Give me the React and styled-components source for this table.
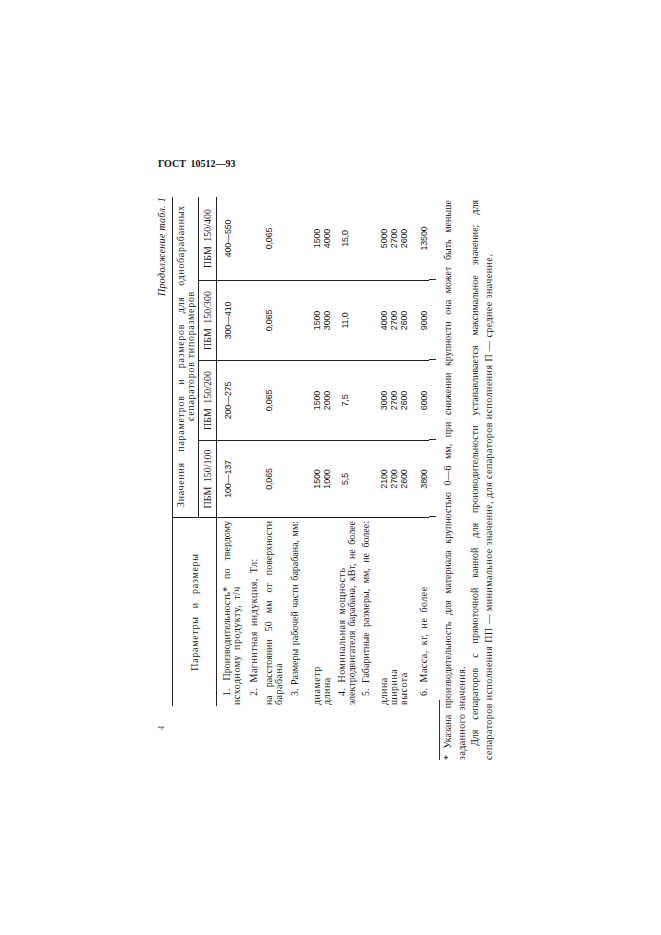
import React from "react";
import styled, { createGlobalStyle } from "styled-components";

const GlobalStyle = createGlobalStyle`
  body {
    margin: 0;
    background: #ffffff;
    font-family: "Liberation Serif", "DejaVu Serif", serif;
    color: #1b1b1b;
  }
`;

const columns = ["ПБМ 150/100", "ПБМ 150/200", "ПБМ 150/300", "ПБМ 150/400"];

const rows = [
  {
    top: 5,
    param: [
      { text: "1. Производительность* по твердому", justify: true, indent: true },
      { text: "исходному продукту, т/ч" },
    ],
    values: [["100—137"], ["200—275"], ["300—410"], ["400—550"]],
    shift: 1,
  },
  {
    top: 7,
    param: [{ text: "2. Магнитная индукция, Тл:", indent: true }],
    values: [[], [], [], []],
  },
  {
    top: 5,
    param: [
      { text: "на расстоянии 50 мм от поверхности", justify: true },
      { text: "барабана" },
    ],
    values: [["0,065"], ["0,065"], ["0,065"], ["0,065"]],
  },
  {
    top: 6,
    param: [{ text: "3. Размеры рабочей части барабана, мм:", justify: true, indent: true }],
    values: [[], [], [], []],
  },
  {
    top: 12,
    param: [{ text: "диаметр" }, { text: "длина" }],
    values: [
      ["1500", "1000"],
      ["1500", "2000"],
      ["1500", "3000"],
      ["1500", "4000"],
    ],
  },
  {
    top: 5,
    param: [
      { text: "4. Номинальная мощность", indent: true },
      { text: "электродвигателя барабана, кВт, не более", justify: true },
    ],
    values: [["5,5"], ["7,5"], ["11,0"], ["15,0"]],
    shift: 3,
  },
  {
    top: 4,
    param: [{ text: "5. Габаритные размеры, мм, не более:", justify: true, indent: true }],
    values: [[], [], [], []],
  },
  {
    top: 8,
    param: [{ text: "длина" }, { text: "ширина" }, { text: "высота" }],
    values: [
      ["2100", "2700", "2600"],
      ["3000", "2700", "2600"],
      ["4000", "2700", "2600"],
      ["5000", "2700", "2600"],
    ],
  },
  {
    top: 10,
    param: [{ text: "6. Масса, кг, не более", indent: true }],
    values: [["3800"], ["6000"], ["9000"], ["13500"]],
  },
];

const Page = styled.div`
  padding: 157px 0 0 152px;
`;

const DocCode = styled.div`
  margin-left: 6px;
  font-size: 10px;
  line-height: 14px;
  font-weight: bold;
  word-spacing: 2px;
  color: #111;
`;

/* box that reserves the rotated sheet's footprint on screen */
const Frame = styled.div`
  margin-top: 24px;
  width: 350px;
  height: 575px;
`;

/* the landscape page, laid out normally and turned a quarter left */
const Sheet = styled.div`
  width: 575px;
  height: 350px;
  transform-origin: top left;
  transform: rotate(-90deg) translateX(-100%);
  font-size: 10px;
  line-height: 10px;
`;

const CaptionRow = styled.div`
  display: flex;
  justify-content: space-between;
  align-items: center;
  height: 20px;
  padding: 0 2px 0 40px;
`;

const PageMark = styled.span`
  font-size: 8px;
  color: #444;
`;

const Caption = styled.span`
  font-style: italic;
  letter-spacing: 0.3px;
`;

const Table = styled.div`
  margin-left: 64px;
  width: 509px;
  border-top: 1.5px solid #222;
`;

const Grid = styled.div`
  display: grid;
  grid-template-columns: 189px 77px 80px 80px 83px;
`;

const HeadGrid = styled(Grid)`
  grid-template-rows: 26px 17px;
  border-bottom: 1.5px solid #222;
`;

const ParamHead = styled.div`
  grid-row: 1 / span 2;
  display: flex;
  align-items: center;
  justify-content: center;
  border-right: 1px solid #222;
  letter-spacing: 0.7px;
  word-spacing: 5px;
`;

const GroupHead = styled.div`
  grid-column: 2 / span 4;
  display: flex;
  flex-direction: column;
  justify-content: center;
  padding: 0 8px 0 10px;
  border-bottom: 1px solid #222;
  text-align: center;
  letter-spacing: 0.7px;
`;

const JustLine = styled.div`
  text-align: justify;
  text-align-last: justify;
`;

const SubHead = styled.div`
  display: flex;
  align-items: center;
  justify-content: center;
  border-right: ${(p) => (p.$last ? "none" : "1px solid #222")};
  white-space: nowrap;
  word-spacing: 2px;
`;

const BodyRow = styled(Grid)`
  & > div {
    padding-top: ${(p) => p.$top}px;
  }
`;

const ParamCell = styled.div`
  padding-left: 1px;
  padding-right: 3px;
  border-right: 1px solid #222;
`;

const ParamLine = styled.div`
  padding-left: ${(p) => (p.$indent ? 9 : 0)}px;
  text-align: ${(p) => (p.$justify ? "justify" : "left")};
  text-align-last: ${(p) => (p.$justify ? "justify" : "left")};
  letter-spacing: ${(p) => (p.$justify ? 0 : 0.5)}px;
  word-spacing: ${(p) => (p.$justify ? 0 : 2)}px;
  white-space: nowrap;
`;

const ValueCell = styled.div`
  display: flex;
  flex-direction: column;
  align-items: center;
  border-right: ${(p) => (p.$last ? "none" : "1px solid #222")};
`;

const ValueStack = styled.div`
  display: flex;
  flex-direction: column;
  margin-top: ${(p) => p.$shift || 0}px;
  font-family: "Liberation Sans Narrow", "Liberation Sans", sans-serif;
  font-size: 9px;
  letter-spacing: -0.2px;
`;

const BodyEnd = styled(Grid)`
  height: 7px;
  & > div + div {
    border-left: 1px solid #222;
  }
`;

const Footnotes = styled.div`
  margin: 3px 5px 0 10px;
  line-height: 13.5px;
`;

const NoteRule = styled.div`
  width: 60px;
  border-top: 1px solid #333;
  margin-bottom: 1px;
`;

const NoteLine = styled.div`
  padding-left: ${(p) => (p.$indent ? 14 : 0)}px;
  text-align: ${(p) => (p.$justify ? "justify" : "left")};
  text-align-last: ${(p) => (p.$justify ? "justify" : "left")};
  letter-spacing: ${(p) => (p.$justify ? 0 : 0.45)}px;
  white-space: nowrap;
`;

export default function App() {
  return (
    <>
      <GlobalStyle />
      <Page>
        <DocCode>ГОСТ 10512—93</DocCode>
        <Frame>
          <Sheet>
            <CaptionRow>
              <PageMark>4</PageMark>
              <Caption>Продолжение табл. 1</Caption>
            </CaptionRow>
            <Table>
              <HeadGrid>
                <ParamHead>Параметры и размеры</ParamHead>
                <GroupHead>
                  <JustLine>Значения параметров и размеров для однобарабанных</JustLine>
                  <div>сепараторов типоразмеров</div>
                </GroupHead>
                {columns.map((c, i) => (
                  <SubHead key={c} $last={i === columns.length - 1}>
                    {c}
                  </SubHead>
                ))}
              </HeadGrid>
              {rows.map((r, ri) => (
                <BodyRow key={ri} $top={r.top}>
                  <ParamCell>
                    {r.param.map((l, li) => (
                      <ParamLine key={li} $indent={l.indent} $justify={l.justify}>
                        {l.text}
                      </ParamLine>
                    ))}
                  </ParamCell>
                  {r.values.map((v, vi) => (
                    <ValueCell key={vi} $last={vi === r.values.length - 1}>
                      <ValueStack $shift={r.shift}>
                        {v.map((n, ni) => (
                          <span key={ni}>{n}</span>
                        ))}
                      </ValueStack>
                    </ValueCell>
                  ))}
                </BodyRow>
              ))}
              <BodyEnd>
                <div />
                <div />
                <div />
                <div />
                <div />
              </BodyEnd>
            </Table>
            <Footnotes>
              <NoteRule />
              <NoteLine $justify>
                * Указана производительность для материала крупностью 0—6 мм, при снижении крупности она может быть меньше
              </NoteLine>
              <NoteLine>заданного значения.</NoteLine>
              <NoteLine $indent $justify>
                Для сепараторов с прямоточной ванной для производительности устанавливается максимальное значение; для
              </NoteLine>
              <NoteLine>
                сепараторов исполнения ПП — минимальное значение, для сепараторов исполнения П — среднее значение.
              </NoteLine>
            </Footnotes>
          </Sheet>
        </Frame>
      </Page>
    </>
  );
}
